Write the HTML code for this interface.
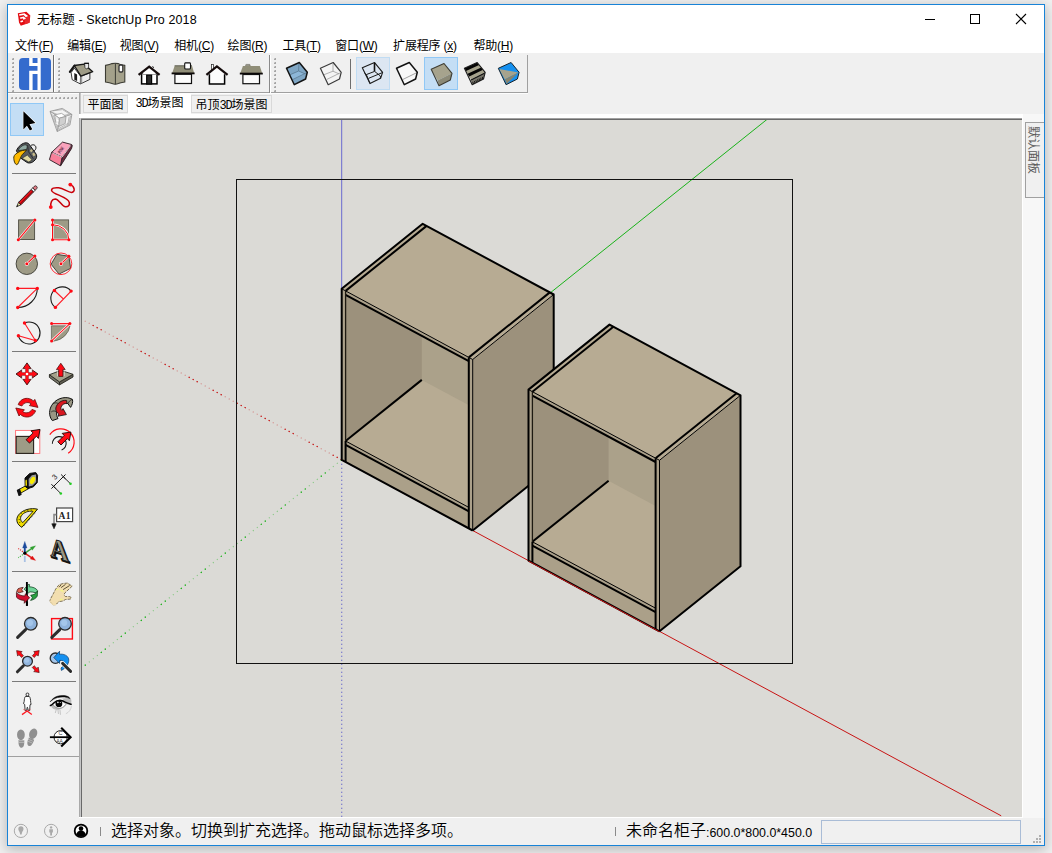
<!DOCTYPE html>
<html lang="zh-CN"><head><meta charset="utf-8"><title>无标题 - SketchUp Pro 2018</title>
<style>
html,body{margin:0;padding:0}
body{width:1052px;height:853px;overflow:hidden;position:relative;background:#f1f1f1;font-family:"Liberation Sans","Noto Sans CJK SC",sans-serif;font-size:12px;color:#000}
#win{position:absolute;left:7px;top:4px;width:1036px;height:840px;border:1px solid #1883d7;background:#f0f0f0;box-shadow:0 3px 12px 1px rgba(0,0,0,.24)}
#title{position:absolute;left:0;top:0;width:1036px;height:30px;background:#fff}
#ttext{position:absolute;left:29px;top:7px;font-size:12.5px;line-height:16px;white-space:nowrap;letter-spacing:.12px}
#menu{position:absolute;left:0;top:30px;width:1036px;height:18px;background:#fff}
#menu span{position:absolute;top:3px;line-height:16px;font-size:12px;white-space:nowrap;letter-spacing:-.2px}
#menu u{text-decoration:underline;text-underline-offset:1px}
#tabs{position:absolute;left:0;top:0}
.tab{position:absolute;top:95px;height:18px;box-sizing:border-box;border:1px solid #d9d9d9;background:#f0f0f0;font-size:12px;line-height:18px;text-align:center;white-space:nowrap;font-family:"Liberation Sans","Noto Sans CJK SC",sans-serif}
.tab.sel{top:93px;height:21px;background:#fff;border-color:#fff;border-top-color:#e3e3e3;line-height:19px}
.tab .n{font-size:12px;letter-spacing:-1.2px;font-family:"Liberation Mono","Liberation Sans",monospace}
#tray{position:absolute;left:1023px;top:114px;width:21px;height:704px;background:#f7f7f7}
#traytab{position:absolute;left:2px;top:8px;width:19px;height:76px;box-sizing:border-box;border:1px solid #a0a0a0;border-right:none;background:#f0f0f0}
#traytab span{position:absolute;left:15px;top:3px;transform-origin:0 0;transform:rotate(90deg);font-size:12px;line-height:16px;white-space:nowrap;color:#5a5a5a}
#status{position:absolute;left:8px;top:818px;width:1036px;height:27px;background:#f0f0f0}
#st1{position:absolute;left:103px;top:3px;font-weight:350;font-size:16px;line-height:20px;white-space:nowrap}
#st2{position:absolute;left:618px;top:3px;font-weight:350;font-size:16px;line-height:20px;white-space:nowrap}
#st2 .sm{font-size:12.4px;position:relative;top:1px}
#vcb{position:absolute;left:813px;top:2px;width:200px;height:24px;box-sizing:border-box;border:1px solid #a9bcd6;background:#f0f0f0}
#overlay{position:absolute;left:0;top:0}

</style></head><body>
<div id="win">
<div id="title"><span id="ttext">无标题 - SketchUp Pro 2018</span></div>
<div id="menu">
<span style="left:7.0px">文件(<u>F</u>)</span><span style="left:59.3px">编辑(<u>E</u>)</span><span style="left:111.8px">视图(<u>V</u>)</span><span style="left:166.3px">相机(<u>C</u>)</span><span style="left:219.6px">绘图(<u>R</u>)</span><span style="left:274.4px">工具(<u>T</u>)</span><span style="left:327.3px">窗口(<u>W</u>)</span><span style="left:385.1px">扩展程序 (<u>x</u>)</span><span style="left:465.4px">帮助(<u>H</u>)</span>
</div>
</div>
<div id="tbarea"></div>
<div id="lefttb"></div>
<div id="tabs">
<div class="tab" style="left:83px;width:45px">平面图</div>
<div class="tab sel" style="left:128px;width:63px"><span class="n">3D</span>场景图</div>
<div class="tab" style="left:191px;width:81px">吊顶<span class="n">3D</span>场景图</div>
</div>
<div id="tray"><div id="traytab"><span>默认面板</span></div></div>
<div id="status">
<span id="st1">选择对象。切换到扩充选择。拖动鼠标选择多项。</span>
<span id="st2">未命名柜子<span class="sm">:600.0*800.0*450.0</span></span>
<div id="vcb"></div>
</div>
<svg id="overlay" width="1052" height="853" viewBox="0 0 1052 853">
<rect x="82" y="120" width="940" height="697" fill="#dbdad6"/>
<svg x="82" y="120" width="940" height="697" viewBox="82 120 940 697" overflow="hidden">
<line x1="341.7" y1="120" x2="341.7" y2="459.8" stroke="#6a6ad0" stroke-width="1"/>
<line x1="341.7" y1="459.8" x2="341.7" y2="817" stroke="#5c5cc8" stroke-width="1.2" stroke-dasharray="1 3"/>
<line x1="341.7" y1="459.8" x2="767.5" y2="119.0" stroke="#19b219" stroke-width="1"/>
<line x1="341.7" y1="459.8" x2="81.0" y2="668.6" stroke="#19b219" stroke-opacity="0.45" stroke-width="1.1" stroke-dasharray="1.1 4.024"/>
<line x1="341.7" y1="459.8" x2="81.0" y2="668.6" stroke="#0fae0f" stroke-width="1.2" stroke-dasharray="1.2 3.924 1.2 19.298" stroke-dashoffset="5.124"/>
<line x1="341.7" y1="459.8" x2="81.0" y2="318.9" stroke="#c81414" stroke-opacity="0.4" stroke-width="1.1" stroke-dasharray="1.1 3.447"/>
<line x1="341.7" y1="459.8" x2="81.0" y2="318.9" stroke="#c40a0a" stroke-width="1.2" stroke-dasharray="1.2 3.347 1.2 3.347 1.2 16.988"/>
<line x1="341.7" y1="459.8" x2="1001.2" y2="815.8" stroke="#c81414" stroke-width="1"/>
<rect x="236.5" y="179.5" width="556" height="484" fill="none" stroke="#111" stroke-width="1"/>
<polygon points="472.7,530.5 553.7,465.5 553.7,294.5 472.7,359.5" fill="#9c917c"/>
<polygon points="341.7,288.8 472.7,359.5 553.7,294.5 422.7,223.8" fill="#b7ab93"/>
<polygon points="341.7,459.8 472.7,530.5 472.7,359.5 341.7,288.8" fill="#aba08a"/>
<polygon points="345.6,461.9 468.8,528.4 468.8,511.3 345.6,444.8" fill="#aba089"/>
<clipPath id="op1"><polygon points="345.6,441.0 468.8,507.4 468.8,361.2 345.6,294.8"/></clipPath>
<g clip-path="url(#op1)">
<polygon points="421.8,379.9 544.9,446.3 544.9,296.3 421.8,229.8" fill="#aba18a"/>
<polygon points="345.6,441.0 421.8,379.9 421.8,229.8 345.6,290.9" fill="#9c917c"/>
<polygon points="345.6,441.0 468.8,507.4 544.9,446.3 421.8,379.9" fill="#b7ab93"/>
<line x1="345.6" y1="441.0" x2="421.8" y2="379.9" stroke="#000" stroke-width="2"/>
</g>
<line x1="345.6" y1="290.9" x2="468.8" y2="357.4" stroke="#000" stroke-width="1"/>
<line x1="345.6" y1="441.0" x2="468.8" y2="507.4" stroke="#000" stroke-width="1"/>
<line x1="472.7" y1="530.5" x2="472.7" y2="359.5" stroke="#000" stroke-width="1"/>
<line x1="472.7" y1="359.5" x2="553.7" y2="294.5" stroke="#000" stroke-width="1"/>
<line x1="341.7" y1="288.8" x2="345.6" y2="290.9" stroke="#000" stroke-width="1"/>
<line x1="468.8" y1="357.4" x2="472.7" y2="359.5" stroke="#000" stroke-width="1"/>
<line x1="345.6" y1="294.8" x2="468.8" y2="361.2" stroke="#000" stroke-width="2"/>
<line x1="345.6" y1="444.8" x2="468.8" y2="511.3" stroke="#000" stroke-width="2"/>
<line x1="345.6" y1="441.0" x2="345.6" y2="290.9" stroke="#1e1a12" stroke-width="1.3"/>
<line x1="345.6" y1="461.9" x2="345.6" y2="441.0" stroke="#000" stroke-width="2"/>
<line x1="468.8" y1="528.4" x2="468.8" y2="357.4" stroke="#000" stroke-width="2"/>
<line x1="345.6" y1="290.9" x2="426.6" y2="225.9" stroke="#000" stroke-width="2"/>
<line x1="468.8" y1="357.4" x2="549.8" y2="292.4" stroke="#000" stroke-width="2"/>
<polyline fill="none" stroke="#000" stroke-width="2" stroke-linejoin="round" points="472.7,530.5 341.7,459.8 341.7,288.8 422.7,223.8 553.7,294.5 553.7,465.5 472.7,530.5"/>
<polygon points="659.5,631.3 740.5,566.3 740.5,395.3 659.5,460.3" fill="#9c917c"/>
<polygon points="528.5,389.6 659.5,460.3 740.5,395.3 609.5,324.6" fill="#b7ab93"/>
<polygon points="528.5,560.6 659.5,631.3 659.5,460.3 528.5,389.6" fill="#aba08a"/>
<polygon points="532.4,562.7 655.6,629.2 655.6,612.1 532.4,545.6" fill="#aba089"/>
<clipPath id="op2"><polygon points="532.4,541.8 655.6,608.2 655.6,462.0 532.4,395.6"/></clipPath>
<g clip-path="url(#op2)">
<polygon points="608.6,480.7 731.7,547.1 731.7,397.1 608.6,330.6" fill="#aba18a"/>
<polygon points="532.4,541.8 608.6,480.7 608.6,330.6 532.4,391.7" fill="#9c917c"/>
<polygon points="532.4,541.8 655.6,608.2 731.7,547.1 608.6,480.7" fill="#b7ab93"/>
<line x1="532.4" y1="541.8" x2="608.6" y2="480.7" stroke="#000" stroke-width="2"/>
</g>
<line x1="532.4" y1="391.7" x2="655.6" y2="458.2" stroke="#000" stroke-width="1"/>
<line x1="532.4" y1="541.8" x2="655.6" y2="608.2" stroke="#000" stroke-width="1"/>
<line x1="659.5" y1="631.3" x2="659.5" y2="460.3" stroke="#000" stroke-width="1"/>
<line x1="659.5" y1="460.3" x2="740.5" y2="395.3" stroke="#000" stroke-width="1"/>
<line x1="528.5" y1="389.6" x2="532.4" y2="391.7" stroke="#000" stroke-width="1"/>
<line x1="655.6" y1="458.2" x2="659.5" y2="460.3" stroke="#000" stroke-width="1"/>
<line x1="532.4" y1="395.6" x2="655.6" y2="462.0" stroke="#000" stroke-width="2"/>
<line x1="532.4" y1="545.6" x2="655.6" y2="612.1" stroke="#000" stroke-width="2"/>
<line x1="532.4" y1="541.8" x2="532.4" y2="391.7" stroke="#1e1a12" stroke-width="1.3"/>
<line x1="532.4" y1="562.7" x2="532.4" y2="541.8" stroke="#000" stroke-width="2"/>
<line x1="655.6" y1="629.2" x2="655.6" y2="458.2" stroke="#000" stroke-width="2"/>
<line x1="532.4" y1="391.7" x2="613.4" y2="326.7" stroke="#000" stroke-width="2"/>
<line x1="655.6" y1="458.2" x2="736.6" y2="393.2" stroke="#000" stroke-width="2"/>
<polyline fill="none" stroke="#000" stroke-width="2" stroke-linejoin="round" points="659.5,631.3 528.5,560.6 528.5,389.6 609.5,324.6 740.5,395.3 740.5,566.3 659.5,631.3"/>
<line x1="528.5" y1="561.1" x2="659.5" y2="631.8" stroke="#c81414" stroke-width="1"/>
</svg>
<g>
<polygon points="17.8,13.2 26.4,11.7 30.3,15.4 29.6,22.8 20.8,25.8 19.0,22.4" fill="#e30d12"/>
<polygon points="24.5,17.5 29.9,15.6 29.4,22.7 24.8,24.3" fill="#e8282c"/>
<path d="M19.0,14.2 L24.4,13.2 L28.2,16.0 L25.8,17.2 L23.6,14.9 L19.4,15.8Z" fill="#fff"/>
<path d="M19.8,17.6 L23.8,16.6 L26.0,18.8 L23.4,19.7 L22.6,18.3 L20.6,19.0Z" fill="#fff"/>
<path d="M20.2,21.0 L23.0,20.3 L23.2,21.8 L20.8,22.6Z" fill="#fff"/>
</g>
<path d="M925,19.5h10" stroke="#000" stroke-width="1" fill="none"/>
<rect x="970.5" y="14.5" width="9" height="9" stroke="#000" stroke-width="1" fill="none"/>
<path d="M1016,14 l10,10 M1026,14 l-10,10" stroke="#000" stroke-width="1.1" fill="none"/>
<path d="M13,58 h1 v1 h-1z M12,59 h2 v1 h-2z" fill="#a6a6a6"/><path d="M12,58 h1 v1 h-1z" fill="#c9c9c9"/><path d="M13,62 h1 v1 h-1z M12,63 h2 v1 h-2z" fill="#a6a6a6"/><path d="M12,62 h1 v1 h-1z" fill="#c9c9c9"/><path d="M13,66 h1 v1 h-1z M12,67 h2 v1 h-2z" fill="#a6a6a6"/><path d="M12,66 h1 v1 h-1z" fill="#c9c9c9"/><path d="M13,70 h1 v1 h-1z M12,71 h2 v1 h-2z" fill="#a6a6a6"/><path d="M12,70 h1 v1 h-1z" fill="#c9c9c9"/><path d="M13,74 h1 v1 h-1z M12,75 h2 v1 h-2z" fill="#a6a6a6"/><path d="M12,74 h1 v1 h-1z" fill="#c9c9c9"/><path d="M13,78 h1 v1 h-1z M12,79 h2 v1 h-2z" fill="#a6a6a6"/><path d="M12,78 h1 v1 h-1z" fill="#c9c9c9"/><path d="M13,82 h1 v1 h-1z M12,83 h2 v1 h-2z" fill="#a6a6a6"/><path d="M12,82 h1 v1 h-1z" fill="#c9c9c9"/><path d="M13,86 h1 v1 h-1z M12,87 h2 v1 h-2z" fill="#a6a6a6"/><path d="M12,86 h1 v1 h-1z" fill="#c9c9c9"/><path d="M13,90 h1 v1 h-1z M12,91 h2 v1 h-2z" fill="#a6a6a6"/><path d="M12,90 h1 v1 h-1z" fill="#c9c9c9"/>
<rect x="53" y="55" width="1" height="38" fill="#6d6d6d"/><rect x="54" y="55" width="1" height="38" fill="#fff"/>
<rect x="8" y="92" width="520" height="1" fill="#a0a0a0"/><rect x="8" y="93" width="520" height="1" fill="#fdfdfd"/>
<path d="M59,58 h1 v1 h-1z M58,59 h2 v1 h-2z" fill="#a6a6a6"/><path d="M58,58 h1 v1 h-1z" fill="#c9c9c9"/><path d="M59,62 h1 v1 h-1z M58,63 h2 v1 h-2z" fill="#a6a6a6"/><path d="M58,62 h1 v1 h-1z" fill="#c9c9c9"/><path d="M59,66 h1 v1 h-1z M58,67 h2 v1 h-2z" fill="#a6a6a6"/><path d="M58,66 h1 v1 h-1z" fill="#c9c9c9"/><path d="M59,70 h1 v1 h-1z M58,71 h2 v1 h-2z" fill="#a6a6a6"/><path d="M58,70 h1 v1 h-1z" fill="#c9c9c9"/><path d="M59,74 h1 v1 h-1z M58,75 h2 v1 h-2z" fill="#a6a6a6"/><path d="M58,74 h1 v1 h-1z" fill="#c9c9c9"/><path d="M59,78 h1 v1 h-1z M58,79 h2 v1 h-2z" fill="#a6a6a6"/><path d="M58,78 h1 v1 h-1z" fill="#c9c9c9"/><path d="M59,82 h1 v1 h-1z M58,83 h2 v1 h-2z" fill="#a6a6a6"/><path d="M58,82 h1 v1 h-1z" fill="#c9c9c9"/><path d="M59,86 h1 v1 h-1z M58,87 h2 v1 h-2z" fill="#a6a6a6"/><path d="M58,86 h1 v1 h-1z" fill="#c9c9c9"/><path d="M59,90 h1 v1 h-1z M58,91 h2 v1 h-2z" fill="#a6a6a6"/><path d="M58,90 h1 v1 h-1z" fill="#c9c9c9"/>
<rect x="269" y="55" width="1" height="38" fill="#8a8a8a"/><rect x="270" y="55" width="1" height="38" fill="#fff"/>
<path d="M275,58 h1 v1 h-1z M274,59 h2 v1 h-2z" fill="#a6a6a6"/><path d="M274,58 h1 v1 h-1z" fill="#c9c9c9"/><path d="M275,62 h1 v1 h-1z M274,63 h2 v1 h-2z" fill="#a6a6a6"/><path d="M274,62 h1 v1 h-1z" fill="#c9c9c9"/><path d="M275,66 h1 v1 h-1z M274,67 h2 v1 h-2z" fill="#a6a6a6"/><path d="M274,66 h1 v1 h-1z" fill="#c9c9c9"/><path d="M275,70 h1 v1 h-1z M274,71 h2 v1 h-2z" fill="#a6a6a6"/><path d="M274,70 h1 v1 h-1z" fill="#c9c9c9"/><path d="M275,74 h1 v1 h-1z M274,75 h2 v1 h-2z" fill="#a6a6a6"/><path d="M274,74 h1 v1 h-1z" fill="#c9c9c9"/><path d="M275,78 h1 v1 h-1z M274,79 h2 v1 h-2z" fill="#a6a6a6"/><path d="M274,78 h1 v1 h-1z" fill="#c9c9c9"/><path d="M275,82 h1 v1 h-1z M274,83 h2 v1 h-2z" fill="#a6a6a6"/><path d="M274,82 h1 v1 h-1z" fill="#c9c9c9"/><path d="M275,86 h1 v1 h-1z M274,87 h2 v1 h-2z" fill="#a6a6a6"/><path d="M274,86 h1 v1 h-1z" fill="#c9c9c9"/><path d="M275,90 h1 v1 h-1z M274,91 h2 v1 h-2z" fill="#a6a6a6"/><path d="M274,90 h1 v1 h-1z" fill="#c9c9c9"/>
<rect x="350" y="59" width="1" height="30" fill="#6d6d6d"/>
<rect x="527" y="55" width="1" height="38" fill="#a0a0a0"/>
<path d="M12,97 h1 v1 h-1z M11,98 h2 v1 h-2z" fill="#a6a6a6"/><path d="M11,97 h1 v1 h-1z" fill="#c9c9c9"/><path d="M16,97 h1 v1 h-1z M15,98 h2 v1 h-2z" fill="#a6a6a6"/><path d="M15,97 h1 v1 h-1z" fill="#c9c9c9"/><path d="M20,97 h1 v1 h-1z M19,98 h2 v1 h-2z" fill="#a6a6a6"/><path d="M19,97 h1 v1 h-1z" fill="#c9c9c9"/><path d="M24,97 h1 v1 h-1z M23,98 h2 v1 h-2z" fill="#a6a6a6"/><path d="M23,97 h1 v1 h-1z" fill="#c9c9c9"/><path d="M28,97 h1 v1 h-1z M27,98 h2 v1 h-2z" fill="#a6a6a6"/><path d="M27,97 h1 v1 h-1z" fill="#c9c9c9"/><path d="M32,97 h1 v1 h-1z M31,98 h2 v1 h-2z" fill="#a6a6a6"/><path d="M31,97 h1 v1 h-1z" fill="#c9c9c9"/><path d="M36,97 h1 v1 h-1z M35,98 h2 v1 h-2z" fill="#a6a6a6"/><path d="M35,97 h1 v1 h-1z" fill="#c9c9c9"/><path d="M40,97 h1 v1 h-1z M39,98 h2 v1 h-2z" fill="#a6a6a6"/><path d="M39,97 h1 v1 h-1z" fill="#c9c9c9"/><path d="M44,97 h1 v1 h-1z M43,98 h2 v1 h-2z" fill="#a6a6a6"/><path d="M43,97 h1 v1 h-1z" fill="#c9c9c9"/><path d="M48,97 h1 v1 h-1z M47,98 h2 v1 h-2z" fill="#a6a6a6"/><path d="M47,97 h1 v1 h-1z" fill="#c9c9c9"/><path d="M52,97 h1 v1 h-1z M51,98 h2 v1 h-2z" fill="#a6a6a6"/><path d="M51,97 h1 v1 h-1z" fill="#c9c9c9"/><path d="M56,97 h1 v1 h-1z M55,98 h2 v1 h-2z" fill="#a6a6a6"/><path d="M55,97 h1 v1 h-1z" fill="#c9c9c9"/><path d="M60,97 h1 v1 h-1z M59,98 h2 v1 h-2z" fill="#a6a6a6"/><path d="M59,97 h1 v1 h-1z" fill="#c9c9c9"/><path d="M64,97 h1 v1 h-1z M63,98 h2 v1 h-2z" fill="#a6a6a6"/><path d="M63,97 h1 v1 h-1z" fill="#c9c9c9"/><path d="M68,97 h1 v1 h-1z M67,98 h2 v1 h-2z" fill="#a6a6a6"/><path d="M67,97 h1 v1 h-1z" fill="#c9c9c9"/><path d="M72,97 h1 v1 h-1z M71,98 h2 v1 h-2z" fill="#a6a6a6"/><path d="M71,97 h1 v1 h-1z" fill="#c9c9c9"/><path d="M76,97 h1 v1 h-1z M75,98 h2 v1 h-2z" fill="#a6a6a6"/><path d="M75,97 h1 v1 h-1z" fill="#c9c9c9"/>
<rect x="12" y="173" width="64" height="1" fill="#7a7a7a"/>
<rect x="12" y="351" width="64" height="1" fill="#7a7a7a"/>
<rect x="12" y="461" width="64" height="1" fill="#7a7a7a"/>
<rect x="12" y="571" width="64" height="1" fill="#7a7a7a"/>
<rect x="12" y="681" width="64" height="1" fill="#7a7a7a"/>
<rect x="8" y="756" width="71" height="1" fill="#a0a0a0"/>
<rect x="79" y="118" width="944" height="1" fill="#a0a0a0"/><rect x="79" y="93" width="1" height="724" fill="#a9a9a9"/><rect x="80" y="93" width="1" height="724" fill="#c6c6c6"/>
<rect x="81" y="119" width="941" height="1" fill="#696969"/><rect x="81" y="119" width="1" height="698" fill="#696969"/>
<rect x="79" y="817" width="944" height="1" fill="#fff"/><rect x="1022" y="118" width="1" height="700" fill="#fff"/>
<rect x="79" y="114" width="944" height="4" fill="#fff"/>
<g fill="none" stroke="#a9a9a9" stroke-width="1">
<circle cx="20.9" cy="830.9" r="6.6"/><circle cx="51.1" cy="830.9" r="6.6"/></g>
<path d="M20.9,826.3 a2.6,2.6 0 0 1 2.6,2.6 c0,1.6 -1.7,2.6 -1.9,5.6 h-1.4 c-0.2,-3 -1.9,-4 -1.9,-5.6 a2.6,2.6 0 0 1 2.6,-2.6z" fill="#a9a9a9"/>
<circle cx="51.1" cy="827.4" r="1.2" fill="#a9a9a9"/><path d="M49.3,829.3h3.6v3.2h-0.9v3h-1.8v-3h-0.9z" fill="#a9a9a9"/>
<circle cx="81" cy="830.9" r="7.2" fill="#000"/><circle cx="81" cy="830.9" r="5.4" fill="#fff"/>
<circle cx="81" cy="828.6" r="2.3" fill="#000"/><path d="M76.4,834.2 a4.6,3.6 0 0 1 9.2,0 a5.4,5.4 0 0 1 -9.2,0z" fill="#000"/>
<rect x="100" y="827" width="1" height="9" fill="#8a8a8a"/><rect x="615" y="827" width="1" height="9" fill="#8a8a8a"/>
<rect x="1039" y="835" width="2" height="2" fill="#b0b0b0"/>
<rect x="1036" y="838" width="2" height="2" fill="#b0b0b0"/>
<rect x="1039" y="838" width="2" height="2" fill="#b0b0b0"/>
<rect x="1033" y="841" width="2" height="2" fill="#b0b0b0"/>
<rect x="1036" y="841" width="2" height="2" fill="#b0b0b0"/>
<rect x="1039" y="841" width="2" height="2" fill="#b0b0b0"/>
<g transform="translate(19,58)" ><rect x="0" y="0" width="32" height="32" rx="4" fill="#346bcd"/>
<path d="M10.2,0 h3.4 v4.9 h4.9 V0 h3.2 v32 h-3.2 V16 h-4.9 v16 h-3.4 V12.8 h8.3 V8.1 h-8.3z" fill="#fff"/></g>
<g transform="translate(64,58)" >
<polygon points="10.3,10.1 7.1,14.6 8.2,21.7 16.3,25.9 16.5,18.0" fill="#fff" stroke="#222" stroke-width="0.9"/>
<polygon points="16.5,18.4 25.9,14.8 25.9,21.4 16.5,25.9" fill="#ededed" stroke="#222" stroke-width="0.9"/>
<polygon points="16.3,18.6 18.2,18.0 18.2,25.0 16.3,25.8" fill="#9a9a9a"/>
<polygon points="10.3,15 13.1,16.5 13.1,22.9 10.3,21.7" fill="#1c1c1c"/>
<polygon points="10.3,7.5 20.2,6.2 28.7,13.7 16.9,18.2" fill="#9e9b86" stroke="#161616" stroke-width="1.3" stroke-linejoin="round"/>
<path d="M10.5,7.6 L5.9,13.9" stroke="#161616" stroke-width="2.2" stroke-linecap="round" fill="none"/>
<polygon points="20.6,5.4 24.6,5.4 24.6,9.6 22.4,11.0 20.9,9.4" fill="#e8e8e8" stroke="#222" stroke-width="0.8"/>
<rect x="20.2" y="4.7" width="4.8" height="1.3" fill="#111"/>
</g>
<g transform="translate(98,58)" >
<path d="M7.5,7.4 Q12,6.6 14,5.6 Q17.2,4.8 20.4,5.6 Q22,6.6 26.8,7.4 L26.8,24 Q22,24.8 20.4,25.6 Q17.2,26.8 14,25.6 Q12,24.8 7.5,24 Z" fill="#a4a18b" stroke="#3c3c34" stroke-width="1.1"/>
<path d="M17.4,5.4 V26.2" stroke="#3c3c34" stroke-width="1"/>
<rect x="21.0" y="7.0" width="3.8" height="7.0" rx="1.3" fill="#fff" stroke="#333" stroke-width="1.3"/>
</g>
<g transform="translate(132,58)" >
<rect x="9.6" y="16" width="15.4" height="9.9" fill="#fff" stroke="#000" stroke-width="1.5"/>
<polygon points="9.6,16.6 17.2,10.4 25,16.6" fill="#fff"/>
<rect x="14.7" y="17.2" width="4.9" height="8.8" fill="#2b2b2b" stroke="#000" stroke-width="1.2"/>
<path d="M6.6,16.9 L17.2,8.6 L27.6,16.9" stroke="#150c0c" stroke-width="2.2" fill="none" stroke-linejoin="miter"/>
<path d="M20.6,8.2 L21.6,10.0" stroke="#222" stroke-width="1"/>
</g>
<g transform="translate(166,58)" >
<polygon points="8.8,7.6 25.9,7.6 28.2,15 6.2,15" fill="#908e78"/>
<path d="M8.6,7.8 H26" stroke="#55554a" stroke-width="0.8"/>
<path d="M5.6,15.4 H28.6" stroke="#0c0808" stroke-width="1.8"/>
<rect x="8.9" y="16.3" width="16.6" height="9.2" fill="#fcfcfc" stroke="#111" stroke-width="1.2"/>
<rect x="18.7" y="4.8" width="5.8" height="6.2" rx="1" fill="#fff" stroke="#111" stroke-width="1.1"/>
<path d="M18.9,4.9 H24.3" stroke="#444" stroke-width="1.2"/>
</g>
<g transform="translate(200,58)" >
<polygon points="9.3,16.6 16.9,10 24.6,16.6 24.6,26 9.3,26" fill="#fcfcfc"/>
<path d="M9.4,16.2 V26 H24.6 V16.2" stroke="#000" stroke-width="1.5" fill="none"/>
<rect x="11.4" y="6.4" width="2.2" height="5" fill="#fff" stroke="#222" stroke-width="0.7"/>
<path d="M6.4,16.8 L16.9,8.5 L27.6,16.8" stroke="#150c0c" stroke-width="2.2" fill="none"/>
</g>
<g transform="translate(234,58)" >
<rect x="11.6" y="6.4" width="4.6" height="2" rx="0.8" fill="#9a9888" stroke="#55554a" stroke-width="0.5"/>
<polygon points="8.9,7.9 25.8,7.9 28.2,15.2 6.3,15.2" fill="#908e78"/>
<path d="M5.8,15.6 H28.8" stroke="#0c0808" stroke-width="1.8"/>
<rect x="8.9" y="16.5" width="16.6" height="9.2" fill="#fcfcfc" stroke="#111" stroke-width="1.2"/>
</g>
<rect x="356.5" y="57.5" width="33" height="32" fill="#dce6f2" stroke="#c0dcf3" stroke-width="1"/>
<rect x="424.5" y="57.5" width="33" height="32" fill="#c4def5" stroke="#90c8f6" stroke-width="1"/>
<polygon points="286.5,68.3 299.3,62.5 307.3,72.3 305.6,79.0 294.3,84.7" fill="#7fa6c4"/>
<polygon points="290.1,74.7 298.6,71.0 305.4,74.0 293.0,79.4" fill="#8db7d8"/>
<path d="M298.9,63.5 L298.6,71.0 L290.1,74.7 M298.6,71.0 L305.4,74.0 M293.0,79.4 L306.3,72.9" stroke="#5a7a92" stroke-width="0.8" fill="none"/>
<polygon points="286.5,68.3 299.3,62.5 307.3,72.3 305.6,79.0 294.3,84.7" fill="none" stroke="#121212" stroke-width="1.5" stroke-linejoin="round"/>
<polygon points="320.4,68.3 333.2,62.5 341.2,72.3 339.5,79.0 328.2,84.7" fill="#f4f4f4"/>
<path d="M333.0,63.5 L333.0,71.2 L324.0,74.7 M333.0,71.2 L339.3,74.0 M326.9,79.4 L340.2,72.9" stroke="#9c9c9c" stroke-width="0.8" fill="none"/>
<polygon points="320.4,68.3 333.2,62.5 341.2,72.3 339.5,79.0 328.2,84.7" fill="none" stroke="#3a3a3a" stroke-width="1.2" stroke-linejoin="round"/>
<path d="M362.3,67.7 L374.6,62.6 L382.6,72.3 L380.6,78.3 L370.0,83.6 Z" stroke="#1a1a1a" stroke-width="1.1" fill="none" stroke-linejoin="round"/>
<path d="M374.5,62.8 V71.4" stroke="#111" stroke-width="1.6" fill="none"/>
<path d="M374.6,71.4 L366.3,74.6 M374.6,71.4 L380.4,76.0 M368.4,78.4 L382.4,72.6 M366.3,74.6 L370,83.4 M380.4,76.0 L380.4,78.2 M364.5,72.5 L367,76.4" stroke="#1a1a1a" stroke-width="1" fill="none"/>
<polygon points="396.5,68.3 409.3,62.5 417.3,72.3 415.6,79.0 404.3,84.7" fill="#f8f8f8"/>
<path d="M403.0,79.4 L416.7,72.7" stroke="#8c8c8c" stroke-width="0.8"/>
<polygon points="396.5,68.3 409.3,62.5 417.3,72.3 415.6,79.0 404.3,84.7" fill="none" stroke="#121212" stroke-width="1.5" stroke-linejoin="round"/>
<polygon points="431.2,69.3 444.0,63.5 452.0,73.3 437.7,80.4" fill="#a6a38d"/>
<polygon points="437.7,80.4 452.0,73.3 450.3,80.0 439.0,85.7" fill="#8b8976"/>
<polygon points="431.2,69.3 444.0,63.5 452.0,73.3 450.3,80.0 439.0,85.7" fill="none" stroke="#3e3c32" stroke-width="1.1" stroke-linejoin="round"/>
<clipPath id="cf"><polygon points="464.4,68.3 477.2,62.5 485.2,72.3 483.5,79.0 472.2,84.7"/></clipPath>
<g clip-path="url(#cf)">
<polygon points="464.4,68.3 477.2,62.5 485.2,72.3 470.9,79.4" fill="#a6a38d"/>
<polygon points="470.9,79.4 485.2,72.3 483.5,79.0 472.2,84.7" fill="#77756a"/>
<polygon points="464.4,68.3 477.2,62.5 479.1,64.9 466.0,71.0" fill="#050505"/>
<polygon points="467.6,73.8 481.2,67.4 483.1,69.8 469.2,76.5" fill="#050505"/>
<polygon points="470.9,79.4 485.2,72.3 484.8,73.8 471.2,80.6" fill="#101010"/>
<path d="M472.6,81.8 L473.7,84.0" stroke="#111" stroke-width="0.9"/>
<path d="M474.3,81.0 L475.1,83.2" stroke="#111" stroke-width="0.9"/>
<path d="M475.9,80.2 L476.6,82.5" stroke="#111" stroke-width="0.9"/>
<path d="M477.6,79.3 L478.1,81.7" stroke="#111" stroke-width="0.9"/>
<path d="M479.2,78.5 L479.5,81.0" stroke="#111" stroke-width="0.9"/>
<path d="M480.8,77.7 L481.0,80.3" stroke="#111" stroke-width="0.9"/>
<path d="M482.5,76.9 L482.5,79.5" stroke="#111" stroke-width="0.9"/>
</g>
<polygon points="464.4,68.3 477.2,62.5 485.2,72.3 483.5,79.0 472.2,84.7" fill="none" stroke="#1a1a1a" stroke-width="1.1" stroke-linejoin="round"/>
<polygon points="498.3,68.3 511.1,62.5 519.1,72.3 517.4,79.0 506.1,84.7" fill="#1490f0"/>
<polygon points="499.1,68.9 518.3,72.5 504.8,79.4" fill="#a6a38d"/>
<polygon points="504.8,79.4 518.3,72.7 506.7,84.1" fill="#87846f"/>
<polygon points="498.3,68.3 511.1,62.5 519.1,72.3 517.4,79.0 506.1,84.7" fill="none" stroke="#15242e" stroke-width="1.0" stroke-linejoin="round"/>
<rect x="10.5" y="103.5" width="33" height="32" fill="#c4def5" stroke="#90c8f6" stroke-width="1"/>
<polygon points="23.4,111.3 23.4,129.4 26.9,125.8 29.9,130.6 32.3,129.2 29.5,124.2 35.4,122.9" fill="#000" stroke="#fff" stroke-width="1.1" stroke-linejoin="round" paint-order="stroke"/>
<g fill="none" stroke="#8e8e8e" stroke-width="0.8" stroke-linejoin="round">
<polygon points="50,111.4 62.3,108.4 71.9,114.4 69.9,125.1 57.2,131.5" fill="#f4f4f4"/>
<path d="M50,111.4 L60.4,117.6 L71.9,114.4 M60.4,117.6 L57.2,131.5"/>
<path d="M51.6,112.0 L61.2,116.2 L70.6,113.8 M53.0,110.8 L62.6,109.6 L70.8,114.8 M51.2,113.6 L57.8,130 M52.8,114.4 L58.6,129.4 M70.6,116.0 L68.8,124.6 M69.2,116.6 L67.6,125.2 M58.4,130 L69.2,124.4 M59,128.4 L68.8,123" stroke="#a0a0a0" stroke-width="0.7"/>
<polygon points="54.6,114.8 61.6,113.4 66.0,116.4 59.2,118.2" fill="#fff" stroke="#9a9a9a"/>
<polygon points="59.2,118.2 66.0,116.4 65.2,123.6 58.6,126.6" fill="#cfcfcf" stroke="#9a9a9a"/>
<polygon points="54.6,114.8 59.2,118.2 58.6,126.6 55.6,121.4" fill="#ececec" stroke="#9a9a9a"/>
<path d="M56.6,119.6 L58.4,121.2 M56.2,122.6 L58.2,124.6" stroke="#fff" stroke-width="1.2"/>
</g>
<g stroke-linejoin="round">
<path d="M30.8,145.6 C32.6,144.2 35.4,144.6 35.9,147.2 C36.2,149.0 35.0,150.4 33.8,151.2" fill="none" stroke="#111" stroke-width="1"/>
<path d="M16.4,150.8 C18.0,146.6 22.4,142.6 26.4,142.8 C28.2,143.0 29.2,144.0 30.0,145.4 L36.2,154.2 C37.2,156.6 36.6,158.4 35.0,160.0 C33.6,161.6 32.0,162.8 29.6,163.0 C28.4,163.1 27.4,162.8 26.6,162.2 L20.6,158.0 Z" fill="#585b5e" stroke="#111" stroke-width="1"/>
<polygon points="22,158.3 27.3,155.1 32.1,159.8 28.8,162.0" fill="#e0d8a0" stroke="#222" stroke-width="0.6"/>
<polygon points="29.9,150.4 31.4,148.9 32.9,150.8 31,152.6" fill="#c9bd8a"/>
<polygon points="32.1,153.8 34,152.6 35.5,154.9 33.6,156.4" fill="#c9bd8a"/>
<path d="M27.6,145.0 L28.4,151.6 L33.4,158.8" fill="none" stroke="#2a2c2e" stroke-width="0.9"/>
<path d="M18.0,150.6 C19.4,147.6 22.4,145.0 25.0,144.8 C26.6,144.8 27.4,145.6 27.2,147.0 L26.6,149.6 Z" fill="#8fa9a2" stroke="#222" stroke-width="0.7"/>
<path d="M26.5,150.0 C23.6,150.2 21.0,150.6 19.2,151.8 C16.4,153.2 14.2,154.8 13.8,157.0 C13.6,160.6 15.0,164.6 16.8,164.6 C18.4,164.4 18.8,161.2 20.1,159.0 C20.8,157.0 21.4,155.6 22.4,154.5 C23.6,153.0 25.6,151.6 26.5,150.0 Z" fill="#fdb900" stroke="#2a2200" stroke-width="0.9"/>
</g>
<g stroke="#2a1a20" stroke-width="0.9" stroke-linejoin="round">
<polygon points="62.1,157.1 71.4,144.8 72.3,145.4 71.6,148.4 60.6,165.8" fill="#6a2c40"/>
<polygon points="51.6,152.4 62.5,142.1 71.6,144.5 62.1,157.1" fill="#f9a2bc"/>
<polygon points="51.6,152.4 62.1,157.1 60.4,165.8 49.4,159.6" fill="#f8809a"/>
</g>
<path d="M52.4,152.9 L62.0,157.2 L70.6,145.6" stroke="#ffe9f0" stroke-width="0.8" fill="none"/>
<text transform="translate(60.4,154.0) rotate(-58) scale(0.62,1)" font-family="Liberation Sans,sans-serif" font-weight="bold" font-size="5" fill="#5a2038">PINK</text>
<g transform="translate(16.6,206.8) rotate(-45.6)">
<polygon points="0,0 4.6,-1.7 4.6,1.7" fill="#e4dc9c" stroke="#111" stroke-width="0.7"/>
<polygon points="0,0 1.8,-0.7 1.8,0.7" fill="#111"/>
<rect x="4.6" y="-1.7" width="18" height="3.4" fill="#e81018" stroke="#111" stroke-width="0.8"/>
<path d="M4.6,0.5 H22.6" stroke="#8a0008" stroke-width="0.7"/>
<rect x="22.6" y="-1.7" width="2.2" height="3.4" fill="#fff" stroke="#111" stroke-width="0.7"/>
<path d="M24.8,-1.7 h2.2 a1.6,1.7 0 0 1 0,3.4 h-2.2z" fill="#e07a84" stroke="#111" stroke-width="0.7"/>
</g>
<path d="M50.8,207.1 C50.4,202.4 51.6,199.2 55.2,198.9 C59.0,199.0 62.0,206.6 65.5,206.8 C68.2,207.0 69.8,205.2 69.3,202.6 C68.2,196.6 52.4,194.4 51.6,190.6 C51.2,188.2 54.4,187.4 58.6,187.8 C63.6,188.4 68.4,192.6 71.7,192.4 C75.4,192.0 75.0,186.6 70.3,184.6" fill="none" stroke="#c8000a" stroke-width="1.5" stroke-linecap="round"/>
<circle cx="50.8" cy="207.1" r="1.9" fill="#ff0a14"/><circle cx="70.3" cy="184.6" r="1.9" fill="#ff0a14"/>
<rect x="18.6" y="219.9" width="16" height="19.6" fill="#9e9b86" stroke="#4c4a40" stroke-width="0.9"/>
<path d="M18.3,239.8 L34.9,219.9" stroke="#fff" stroke-width="2.2"/><path d="M18.3,239.8 L34.9,219.9" stroke="#ff0a14" stroke-width="1.1"/><circle cx="18.3" cy="239.8" r="1.5" fill="#ff0a14"/><circle cx="34.9" cy="219.9" r="1.5" fill="#ff0a14"/>
<rect x="52.8" y="219.9" width="15.8" height="19.6" fill="#9e9b86" stroke="#5a584c" stroke-width="0.9"/>
<path d="M52.5,219.9 V239.8 H68.9 M52.5,224.7 A16.4,15.1 0 0 1 68.9,239.8" fill="none" stroke="#fff" stroke-width="2.2"/><path d="M52.5,219.9 V239.8 H68.9 M52.5,224.7 A16.4,15.1 0 0 1 68.9,239.8" fill="none" stroke="#ff0a14" stroke-width="1"/>
<circle cx="52.5" cy="219.9" r="1.5" fill="#ff0a14"/><circle cx="52.5" cy="224.7" r="1.5" fill="#ff0a14"/><circle cx="52.5" cy="239.8" r="1.5" fill="#ff0a14"/><circle cx="68.9" cy="239.8" r="1.5" fill="#ff0a14"/>
<circle cx="26.8" cy="263.8" r="10.7" fill="#9e9b86" stroke="#3a3a32" stroke-width="0.9"/>
<path d="M26.8,263.8 L34.9,256" stroke="#fff" stroke-width="2.2"/><path d="M26.8,263.8 L34.9,256" stroke="#ff0a14" stroke-width="1.1"/><circle cx="26.8" cy="263.8" r="2.1" fill="#fff"/><circle cx="26.8" cy="263.8" r="1.5" fill="#ff0a14"/><circle cx="34.9" cy="256.0" r="1.5" fill="#ff0a14"/>
<polygon points="68.9,256.3 56.9,254.3 51.1,264.2 59,274.1 70.6,268.3" fill="#9e9b86" stroke="#3a3a32" stroke-width="0.9"/>
<circle cx="61" cy="263.8" r="10.8" fill="none" stroke="#ff1a24" stroke-width="0.9"/>
<path d="M61,263.8 L68.9,256.3" stroke="#fff" stroke-width="2.2"/><path d="M61,263.8 L68.9,256.3" stroke="#ff0a14" stroke-width="1.1"/><circle cx="61" cy="263.8" r="2.1" fill="#fff"/><circle cx="61.0" cy="263.8" r="1.5" fill="#ff0a14"/><circle cx="68.9" cy="256.3" r="1.5" fill="#ff0a14"/>
<path d="M37.3,288.4 A19.4,19.2 0 0 1 17.7,307.5" fill="none" stroke="#1a1a1a" stroke-width="1.1"/>
<path d="M17.7,288.4 H37.3 L17.7,307.5" fill="none" stroke="#ff1a24" stroke-width="1.1"/><circle cx="17.7" cy="288.4" r="1.7" fill="#ff0a14"/><circle cx="37.3" cy="288.4" r="1.7" fill="#ff0a14"/><circle cx="17.7" cy="307.5" r="1.7" fill="#ff0a14"/>
<path d="M55.4,307.4 A11.4,11.4 0 1 1 71.1,291.1" fill="none" stroke="#1a1a1a" stroke-width="1.1"/>
<path d="M71.1,291.1 L55.4,307.4 M54.4,290.5 L63.3,298.9" fill="none" stroke="#ff1a24" stroke-width="1.2"/><circle cx="54.4" cy="290.5" r="1.7" fill="#ff0a14"/><circle cx="71.1" cy="291.1" r="1.7" fill="#ff0a14"/><circle cx="55.4" cy="307.4" r="1.7" fill="#ff0a14"/>
<path d="M24.5,323 A11,11 0 1 1 18.4,335.7" fill="none" stroke="#1a1a1a" stroke-width="1.1"/>
<path d="M24.5,323 L35.4,340.5 L18.4,335.7" fill="none" stroke="#ff1a24" stroke-width="1.1"/><circle cx="24.5" cy="323.0" r="1.7" fill="#ff0a14"/><circle cx="18.4" cy="335.7" r="1.7" fill="#ff0a14"/><circle cx="35.4" cy="340.5" r="1.7" fill="#ff0a14"/>
<path d="M51.4,325.8 H70 A18.6,18.2 0 0 1 54.4,341 L51.4,341 Z" fill="#9e9b86" stroke="#4c4a40" stroke-width="0.6"/>
<path d="M69.9,323.6 L51.6,340.9" stroke="#fff" stroke-width="2.4"/><path d="M51.6,323.6 H69.9 L51.6,340.9" fill="none" stroke="#ff1a24" stroke-width="1.1"/><circle cx="51.6" cy="323.6" r="1.5" fill="#ff0a14"/><circle cx="69.9" cy="323.6" r="1.5" fill="#ff0a14"/><circle cx="51.6" cy="340.9" r="1.5" fill="#ff0a14"/>
<g><polygon points="28.6,374.0 28.6,368.7 31.1,368.7 27.0,362.9 22.9,368.7 25.4,368.7 25.4,374.0" fill="#ff0a14" stroke="#3a0a0a" stroke-width="0.9" stroke-linejoin="miter"/><polygon points="25.4,374.0 25.4,379.1 22.9,379.1 27.0,384.9 31.1,379.1 28.6,379.1 28.6,374.0" fill="#ff0a14" stroke="#3a0a0a" stroke-width="0.9" stroke-linejoin="miter"/><polygon points="27.0,372.4 21.8,372.4 21.8,369.9 16.0,374.0 21.8,378.1 21.8,375.6 27.0,375.6" fill="#ff0a14" stroke="#3a0a0a" stroke-width="0.9" stroke-linejoin="miter"/><polygon points="27.0,375.6 32.2,375.6 32.2,378.1 38.0,374.0 32.2,369.9 32.2,372.4 27.0,372.4" fill="#ff0a14" stroke="#3a0a0a" stroke-width="0.9" stroke-linejoin="miter"/><rect x="25.4" y="367" width="3.2" height="14" fill="#ff0a14"/><rect x="20" y="372.4" width="14" height="3.2" fill="#ff0a14"/><rect x="22.1" y="369.1" width="3" height="3" fill="#fff" stroke="#bdbdbd" stroke-width="0.5"/><rect x="28.9" y="369.1" width="3" height="3" fill="#fff" stroke="#bdbdbd" stroke-width="0.5"/><rect x="22.1" y="375.9" width="3" height="3" fill="#fff" stroke="#bdbdbd" stroke-width="0.5"/><rect x="28.9" y="375.9" width="3" height="3" fill="#fff" stroke="#bdbdbd" stroke-width="0.5"/><circle cx="27" cy="374" r="1.3" fill="#fff"/></g>
<g stroke="#26261e" stroke-width="0.9" stroke-linejoin="round">
<polygon points="49.4,374.7 59.5,381.9 59.5,384.9 49.4,377.4" fill="#77756a"/>
<polygon points="59.5,381.9 73,374.3 73,377 59.5,384.9" fill="#5f5d52"/>
<polygon points="49.4,374.7 60.8,370.4 73,374.3 59.5,381.9" fill="#a4a18b"/>
</g>
<path d="M57.6,376.2 V370.6 M64.2,376.2 V371" stroke="#e8e8e0" stroke-width="0.7"/>
<polygon points="62.9,376.4 62.9,369.6 65.2,369.6 60.8,363.2 56.4,369.6 58.7,369.6 58.7,376.4" fill="#ff0a14" stroke="#3a0a0a" stroke-width="0.7" stroke-linejoin="miter"/>
<g fill="#ff0a14" stroke="#6a0a0a" stroke-width="0.8" stroke-linejoin="round">
<path d="M18.2,404.6 C19.6,400.6 23.4,398.0 27.6,398.4 C30.0,398.6 32.0,399.6 33.4,401.0 L34.8,399.4 L38.0,407.4 L29.4,405.6 L31.0,403.8 C29.8,402.8 28.4,402.4 26.8,402.6 C24.6,402.8 22.8,404.2 21.8,406.0 Z"/>
<path d="M35.6,410.8 C34.2,414.8 30.4,417.4 26.2,417.0 C23.8,416.8 21.8,415.8 20.4,414.4 L19.0,416.0 L15.8,408.0 L24.4,409.8 L22.8,411.6 C24.0,412.6 25.4,413.0 27.0,412.8 C29.2,412.6 31.0,411.2 32.0,409.4 Z"/>
</g>
<g stroke="#111" stroke-width="1" stroke-linejoin="round">
<path d="M72.4,399.4 C67.0,396.0 57.8,397.4 52.8,403.8 C48.6,409.0 48.6,416.4 52.4,420.6 L58.0,418.6 C55.6,414.6 56.2,410.0 59.4,406.2 C62.4,402.8 66.0,402.2 68.0,403.8 L70.6,407.4 C72.2,405.0 73.2,401.8 72.4,399.4 Z" fill="#9a9784"/>
<path d="M52.8,403.8 C55.8,402.0 58.6,402.6 59.4,406.2 M68.0,403.8 C68.8,401.4 70.4,399.6 72.4,399.4 M51.2,412 C53,410.4 55.4,410.6 56.4,412.4" fill="none" stroke-width="0.7"/>
<path d="M66.6,400.4 C61.4,399.8 56.8,403.4 55.8,408.0 C55.4,410.6 56.8,412.8 58.8,414.0 L58.0,416.2 L66.4,414.6 L63.0,408.6 L62.0,410.4 C60.8,409.4 60.6,407.8 61.6,406.0 C62.6,404.2 64.8,403.2 67.0,403.6 Z" fill="#d81820" stroke-width="0.8"/>
</g>
<rect x="15.6" y="430.4" width="24.2" height="23" fill="#fff" stroke="#ff6a70" stroke-width="0.9"/>
<rect x="16.2" y="436.4" width="17.4" height="17" fill="#9e9b86" stroke="#26221c" stroke-width="1.1"/>
<polygon points="29.5,443.1 36.4,436.3 38.4,438.4 40.0,429.4 31.0,430.8 33.0,432.9 26.1,439.7" fill="#ff0a14" stroke="#1a0606" stroke-width="0.9" stroke-linejoin="miter"/>
<path d="M49.8,434.7 A13.3,13.3 0 1 1 68.2,453.2" fill="none" stroke="#ff0a14" stroke-width="1.2"/>
<path d="M52.4,443.8 A6.9,6.9 0 1 1 61.6,450.0" fill="none" stroke="#1a1a1a" stroke-width="1.1"/>
<polygon points="61.0,445.0 67.4,438.7 69.4,440.7 70.9,432.0 62.2,433.4 64.2,435.4 57.8,441.8" fill="#ff0a14" stroke="#1a0606" stroke-width="0.9" stroke-linejoin="miter"/>
<g stroke-linejoin="round">
<polygon points="19.0,489.4 27.2,485.0 29.0,488.4 20.6,493.2" fill="#f4e000" stroke="#111" stroke-width="0.9"/>
<path d="M17.4,490.4 L19.6,489.4 L21.0,494.4 L19.0,495.4 Z" fill="#111" stroke="#111" stroke-width="1.2"/>
<path d="M25.0,478.0 L29.8,473.4 L35.8,472.6 L37.6,475.4 L37.2,482.6 L33.4,486.8 L27.8,488.6 L25.2,486.4 Z" fill="#0c0c0c" stroke="#0c0c0c" stroke-width="1"/>
<path d="M28.6,479.0 L31.8,475.2 L36.0,474.6 L36.2,482.0 L32.8,485.6 L28.8,486.6 Z" fill="#9a9a9a"/>
<ellipse cx="32.6" cy="480.4" rx="2.3" ry="3.9" transform="rotate(24 32.6 480.4)" fill="#f8ec00"/>
<path d="M25.4,480.4 L26.8,479.6 L27.0,485.6 L25.6,486.0 Z" fill="#f4e000"/>
</g>
<g stroke="#111" stroke-width="0.9" fill="none">
<path d="M53.6,486.4 L63.3,476.7 M53.6,486.4 L60.8,493.5 M63.3,476.7 L70.5,483.8"/>
<path d="M51.4,484.2 L55.8,488.6 M55.8,484.2 L51.4,488.6 M61.1,474.5 L65.5,478.9 M65.5,474.5 L61.1,478.9" stroke-width="1"/>
</g>
<circle cx="60.8" cy="493.5" r="1.3" fill="#22cc22"/><circle cx="70.5" cy="483.8" r="1.3" fill="#22cc22"/>
<text transform="translate(54.6,477.0) rotate(-45)" x="-2" y="2.5" font-family="Liberation Sans,sans-serif" font-size="7.5" fill="#222">3</text>
<g stroke-linejoin="round">
<path d="M21.9,527.3 L37.5,509.2 C31.0,507.6 22.4,509.6 18.4,515.2 C15.4,519.4 16.8,524.6 21.9,527.3 Z" fill="#f0dc00" stroke="#1a1a00" stroke-width="1"/>
<path d="M22.8,522.6 L33.0,511.4 C28.4,510.6 23.6,512.4 21.4,515.8 C19.8,518.2 20.6,521.0 22.8,522.6 Z" fill="#e9e9e9" stroke="#1a1a00" stroke-width="0.9"/>
<path d="M19.6,516.2 L20.6,516.8 M18.6,519.4 L19.8,519.6 M19.2,522.6 L20.4,522.2 M21.4,513.2 L22.2,514.0 M24.2,511.2 L24.8,512.2 M27.6,510.0 L28.0,511.0 M31.2,509.6 L31.4,510.6" stroke="#1a1a00" stroke-width="0.7"/>
<path d="M24.0,525.8 L36.0,512.0" stroke="#1a1a00" stroke-width="0.6" stroke-dasharray="1 1"/>
</g>
<rect x="56.6" y="508.0" width="16" height="13.6" fill="#fff" stroke="#444" stroke-width="1.2"/>
<text x="58.6" y="518.6" font-family="Liberation Serif,serif" font-weight="bold" font-size="9.5" fill="#222" letter-spacing="0.4">A1</text>
<path d="M56.4,514.6 H54 V524.2" fill="none" stroke="#8a8a8a" stroke-width="1.6"/>
<polygon points="51.8,523.8 56.2,523.8 54,528.8" fill="#111" stroke="#111" stroke-width="0.6"/>
<path d="M24.8,553.2 L18.3,548.4" stroke="#e03030" stroke-width="1.2" stroke-dasharray="1.2 1.2"/>
<path d="M24.8,553.2 L18.3,557.8" stroke="#50b850" stroke-width="1.2" stroke-dasharray="1.2 1.2"/>
<path d="M24.8,555.8 V562" stroke="#a9c2e4" stroke-width="1.8"/>
<polygon points="25.1,553.7 31.6,549.2 32.3,550.2 35.6,545.8 30.3,547.3 31.0,548.2 24.5,552.7" fill="#30a030" stroke="#30a030" stroke-width="0.3" stroke-linejoin="miter"/>
<polygon points="24.5,553.7 30.9,558.0 30.3,559.0 35.6,560.4 32.3,556.0 31.6,557.0 25.1,552.7" fill="#e01010" stroke="#e01010" stroke-width="0.3" stroke-linejoin="miter"/>
<polygon points="25.6,553.2 25.6,548.0 27.0,548.0 24.8,541.4 22.6,548.0 24.0,548.0 24.0,553.2" fill="#1c4a9c" stroke="#1c4a9c" stroke-width="0.3" stroke-linejoin="miter"/>
<circle cx="24.8" cy="553.2" r="1.6" fill="#000"/>
<g font-family="Liberation Serif,serif" font-weight="bold" font-size="24">
<text transform="matrix(1.06,0.34,0.09,1.16,51.6,557.2)" fill="#111" stroke="#111" stroke-width="1.5">A</text>
<text transform="matrix(1.06,0.34,0.09,1.16,50.4,556.0)" fill="#9a9784" stroke="#111" stroke-width="0.7">A</text>
</g>
<g stroke-linejoin="round" stroke-width="0.7">
<path d="M16.6,591.5 L18,588.8 C19.6,587.9 21.4,587.5 23.2,587.4 L21.6,589.8 L23.2,591.7 C21.8,591.9 20.4,592.3 19.2,592.8 Z" fill="#e0604c" stroke="#3a0a0a"/>
<path d="M24.1,589.2 L28.2,584.5 L29.6,584.6 L29.2,586.8 C32.5,586.8 36.5,588.2 37.6,590.8 L36,592.9 C34,592.1 31.5,591.9 29.9,591.9 L28.4,592.9 Z" fill="#70d498" stroke="#0a3a18"/>
<path d="M26.9,582 V605.8" stroke="#000" stroke-width="1.9"/>
<path d="M16.4,592.4 L16.5,597.2 C18,599.2 21,600.2 24.3,600.4 L24.3,603.3 L29.7,597.7 L25.4,593.8 L24.8,596 C21,595.8 18,594.6 16.4,592.4Z" fill="#d01030" stroke="#3a0a0a"/>
<path d="M37.6,591 L37.3,596 C36.4,598.2 33.4,599.8 30.6,600.4 L32.4,597.7 L30.7,595.2 C33,594.9 35,594.2 36,592.8 Z" fill="#28a040" stroke="#0a3a18"/>
<path d="M26.9,601.6 V605.8" stroke="#000" stroke-width="1.9"/>
</g>
<path d="M50.0,600.7 C50.6,602.8 52.0,604.2 53.2,604.7 L56.0,604.7 C57.0,603.4 58.0,602.2 59.1,601.5 L62.7,601.1 L65.5,599.5 L69.9,599.1 C71.0,598.9 71.4,598.4 71.1,597.9 C71.0,597.2 70.6,596.8 69.9,596.7 L65.5,596.5 C64.8,596.2 64.4,595.8 64.3,595.1 C64.2,594.3 64.4,593.6 64.7,593.1 L71.9,586.4 C72.1,585.8 71.9,585.4 71.5,585.2 L69.5,585.0 L68.7,583.4 C67.8,583.0 67.0,583.0 66.3,583.2 L63.5,583.4 L59.9,584.4 C59.2,584.7 58.7,585.1 58.3,585.6 L55.6,589.2 L53.2,593.9 L50.4,599.1 Z" fill="#f2deb0" stroke="#4a3c20" stroke-width="0.7" stroke-linejoin="round" stroke-dasharray="3.2 1.1"/>
<path d="M50.0,600.7 C50.6,602.8 52.0,604.2 53.2,604.7 L56.0,604.7" fill="none" stroke="#f2deb0" stroke-width="1.2"/>
<path d="M63.1,589.6 L69.5,585.6 M61.1,587.6 L65.5,584.4 M59.1,587.2 L61.1,584.8" stroke="#3a2e18" stroke-width="0.8" fill="none"/>
<path d="M56.2,589.6 L58.6,589.4 M60.4,589.8 L63.4,591.6 M60,600 L62.6,598.8" stroke="#f4f48a" stroke-width="1.4" fill="none"/>
<path d="M25.6,629.6 L17.6,637.4" stroke="#2c2c2c" stroke-width="3" stroke-linecap="round"/><circle cx="30.8" cy="623.8" r="6.3" fill="#8fb3dc" stroke="#2a2a2a" stroke-width="1.3"/><circle cx="30.0" cy="622.8" r="3.1" fill="#a4c6ea"/>
<rect x="51.6" y="618.6" width="20.8" height="20.4" fill="none" stroke="#ff0a14" stroke-width="1.4"/>
<path d="M59.8,629.6 L51.8,637.4" stroke="#2c2c2c" stroke-width="3" stroke-linecap="round"/><circle cx="65.0" cy="623.8" r="6.3" fill="#8fb3dc" stroke="#2a2a2a" stroke-width="1.3"/><circle cx="64.2" cy="622.8" r="3.1" fill="#a4c6ea"/>
<polygon points="23.5,655.7 20.8,652.9 22.1,651.6 16.6,650.6 17.6,656.1 18.9,654.8 21.7,657.5" fill="#ff0a14" stroke="#3a0a0a" stroke-width="0.6" stroke-linejoin="miter"/><polygon points="34.1,657.5 36.9,654.8 38.2,656.1 39.2,650.6 33.7,651.6 35.0,652.9 32.3,655.7" fill="#ff0a14" stroke="#3a0a0a" stroke-width="0.6" stroke-linejoin="miter"/><polygon points="32.3,667.5 35.0,670.3 33.7,671.6 39.2,672.6 38.2,667.1 36.9,668.4 34.1,665.7" fill="#ff0a14" stroke="#3a0a0a" stroke-width="0.6" stroke-linejoin="miter"/>
<path d="M23.4,665.8 L17.4,671.8" stroke="#2c2c2c" stroke-width="3" stroke-linecap="round"/><circle cx="27.5" cy="661.2" r="4.9" fill="#8fb3dc" stroke="#2a2a2a" stroke-width="1.3"/><circle cx="26.7" cy="660.2" r="2.5" fill="#a4c6ea"/>
<circle cx="55.4" cy="658.2" r="5.2" fill="#a4c6ea" stroke="#2a2a2a" stroke-width="1.3"/>
<path d="M53.8,657.6 L59.6,651.2 L59.4,654.2 C63.6,653.8 67.6,655.2 68.6,658.8 C69.4,662.4 67.0,667.6 61.4,670.4 L61.0,668.0 C63.4,666.2 64.6,663.6 63.6,661.6 C62.8,660.4 61.0,660.2 59.6,660.6 L59.8,663.6 Z" fill="#1490f0" stroke="#0a3a6a" stroke-width="0.7" stroke-linejoin="round"/>
<path d="M62.6,663.4 L70.6,671.4" stroke="#fff" stroke-width="4.4" stroke-linecap="round"/>
<path d="M62.6,663.4 L70.6,671.4" stroke="#2c2c2c" stroke-width="3" stroke-linecap="round"/>
<rect x="26.1" y="693.1" width="2.7" height="2.9" rx="1" fill="#fff" stroke="#222" stroke-width="0.9"/>
<path d="M25.4,696.5 H29.3 C30.2,697.2 30.6,699.6 30.7,702.4 L31.1,704.4 L30.0,704.8 L29.7,710.6 L28.3,710.6 L27.4,707.0 L26.5,710.6 L25.1,710.6 L24.7,704.4 L23.5,703.6 L24.2,701.4 C24.3,699.4 24.6,697.2 25.4,696.5 Z" fill="#fff" stroke="#222" stroke-width="0.9" stroke-linejoin="round"/>
<path d="M26.6,709.6 L27.4,706.6 L28.2,709.6 Z" fill="#666"/>
<path d="M23.2,709.3 L27.1,711 L30.5,709.3" stroke="#ff1a24" stroke-opacity="0.45" stroke-width="1" fill="none"/>
<path d="M22,714.6 L27.1,711 L31.8,714.6" stroke="#ff1a24" stroke-width="1.3" fill="none" stroke-linejoin="round"/>
<g stroke-linecap="round">
<path d="M50.6,705.0 C51.6,708.6 55.0,710.2 58.6,709.8 C61.6,709.4 64.6,707.4 66.4,704.6 L70.8,704.4 C71.8,702.0 71.6,699.4 70.2,697.8 L63,698.6 L55.6,701.2 Z" fill="#a8a8a8" opacity="0.75"/>
<path d="M55.6,700.2 C57.6,698.6 61.0,698.4 63.6,699.4 L62.6,700.6 C60.4,700.0 57.6,700.4 56.0,701.2 Z" fill="#fff"/>
<path d="M53.4,704.8 C55.2,702.6 57.4,701.8 60.0,701.8 C62.6,702.0 64.4,703.0 65.6,704.4 C64.4,706.8 61.8,708.0 59.4,708.0 C56.8,708.0 54.6,706.8 53.4,704.8 Z" fill="#fff"/>
<path d="M50.4,701.5 C52.6,698.6 55.0,696.9 57.2,696.3 C59.4,695.6 62.4,695.3 64.6,695.6 C67.4,696.0 69.4,697.0 69.9,698.6 C68.4,697.8 66.6,697.2 64.4,697.0 C62.0,696.8 59.4,697.0 57.4,697.6 C54.8,698.4 52.4,699.8 50.4,701.5 Z" fill="#050505" stroke="#050505" stroke-width="0.5"/>
<path d="M50.4,705.5 C51.8,705.2 52.8,704.0 54.0,702.8 C55.8,701.2 57.8,700.4 59.9,700.3 C62.0,700.4 63.6,701.2 64.7,701.9 C66.2,702.8 68.2,703.4 71.1,704.3" fill="none" stroke="#050505" stroke-width="1.5"/>
<circle cx="58.9" cy="703.7" r="3.4" fill="#050505"/>
<circle cx="57.9" cy="702.4" r="0.8" fill="#fff"/><circle cx="60.3" cy="702.5" r="0.6" fill="#ddd"/>
<path d="M53.6,705.4 C55.0,707.4 57.2,708.2 59.4,708.2 C61.8,708.2 64.0,707.0 65.4,704.8" fill="none" stroke="#777" stroke-width="0.6"/>
<path d="M58.0,710.2 L58.4,713.6 M60.0,710.2 L60.4,714.4 M56.2,709.8 L55.4,712.6" fill="none" stroke="#b0b0b0" stroke-width="0.7"/>
<path d="M71.4,706.0 C71.2,709.6 69.0,712.4 66.2,713.6" fill="none" stroke="#c4c4c4" stroke-width="0.7"/>
</g>
<g fill="#909090">
<ellipse cx="20.9" cy="734.8" rx="3.9" ry="5.4"/><path d="M18.4,740.0 H24.2 C24.6,744.4 23.8,747.6 21.6,747.8 C19.4,747.6 18.2,744.4 18.6,741.4 Z"/>
<g transform="rotate(22 31 738)"><ellipse cx="31.4" cy="733.2" rx="3.9" ry="5.4"/><path d="M28.8,738.4 H34.6 C35.0,742.8 34.2,746.0 32.0,746.2 C29.8,746.0 28.6,742.8 29.0,739.8 Z"/></g>
</g>
<path d="M18.6,740.6 H24.0 M18.6,742.4 H24.0 M27.6,739.0 L32.8,741.2 M27.0,740.8 L32.2,743.0" stroke="#d0d0d0" stroke-width="0.6"/>
<circle cx="60.6" cy="737.2" r="6.6" fill="#fff" stroke="#111" stroke-width="0.9"/>
<path d="M61.2,727.8 L70.6,737.2 L61.2,746.6" fill="none" stroke="#000" stroke-width="2.1" stroke-linejoin="miter"/>
<path d="M49.9,737.2 H70" stroke="#000" stroke-width="1.8"/>
<text x="58.4" y="735.2" font-family="Liberation Sans,sans-serif" font-size="5.5" fill="#444">C</text>
<text x="56.2" y="743.4" font-family="Liberation Sans,sans-serif" font-size="5" fill="#444">AA</text>
</svg>
</body></html>
